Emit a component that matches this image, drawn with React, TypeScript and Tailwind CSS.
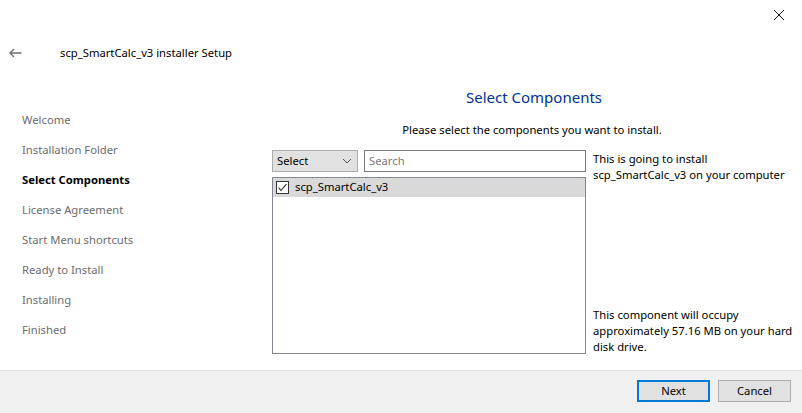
import React from "react";

const steps = [
  "Welcome",
  "Installation Folder",
  "Select Components",
  "License Agreement",
  "Start Menu shortcuts",
  "Ready to Install",
  "Installing",
  "Finished",
];

export default function App() {
  return (
    <div
      className="w-[802px] h-[413px] bg-white flex flex-col text-[11.25px] text-black overflow-hidden"
      style={{ fontFamily: '"Noto Sans", "Liberation Sans", sans-serif' }}
    >
      {/* Title bar */}
      <div className="h-[30px] flex justify-end items-start">
        <div className="w-[46px] h-[30px] flex items-center justify-center">
          <svg width="12" height="12" viewBox="0 0 12 12">
            <path d="M1 1L11 11M11 1L1 11" stroke="#111" strokeWidth="1" fill="none" />
          </svg>
        </div>
      </div>

      {/* Header */}
      <div className="h-[46px] flex items-center">
        <div className="w-[30px] flex justify-center pl-[1px]">
          <svg width="13" height="10" viewBox="0 0 13 10">
            <path d="M5 1L1 5L5 9M1 5H12.5" stroke="#707070" strokeWidth="1.4" fill="none" />
          </svg>
        </div>
        <span className="ml-[30px] pt-[1px]">scp_SmartCalc_v3 installer Setup</span>
      </div>

      {/* Main */}
      <div className="flex-1 flex">
        <div className="w-[272px] pl-[22px] pt-[29px]">
          {steps.map((s) => (
            <div
              key={s}
              className={`h-[30px] leading-[30px] ${s === "Select Components" ? "font-bold text-black" : "text-[#6d6d6d]"}`}
            >
              {s}
            </div>
          ))}
        </div>

        <div className="flex-1 pr-[12px] flex flex-col">
          <div className="h-[31px] flex items-end justify-center">
            <span className="text-[15px] text-[#003399] leading-[20px] pl-[6px]">Select Components</span>
          </div>
          <div className="h-[38px] flex items-center justify-center pl-[2px] pt-[9px]">
            Please select the components you want to install.
          </div>

          <div className="flex gap-[7px] mt-[5px]">
            <div className="w-[314px] flex flex-col gap-[5px]">
              <div className="flex gap-[6px] h-[22px]">
                <div className="w-[86px] h-[22px] bg-[#e1e1e1] border border-[#adadad] flex items-center justify-between px-[4px]">
                  <span>Select</span>
                  <svg width="10" height="6" viewBox="0 0 10 6" className="mr-[1px]">
                    <path d="M1 1L5 5L9 1" stroke="#555" strokeWidth="1" fill="none" />
                  </svg>
                </div>
                <div className="flex-1 h-[22px] border border-[#7a7a7a] flex items-center px-[4px] text-[#7a7a7a]">
                  Search
                </div>
              </div>
              <div className="h-[177px] border border-[#828790] bg-white">
                <div className="h-[19px] bg-[#d9d9d9] flex items-center pl-[3px] gap-[6px]">
                  <div className="w-[13px] h-[13px] border border-[#333] bg-white flex items-center justify-center">
                    <svg width="11" height="11" viewBox="0 0 11 11">
                      <path d="M1.5 5.5L4 8.5L9.5 2" stroke="#222" strokeWidth="1.1" fill="none" />
                    </svg>
                  </div>
                  <span>scp_SmartCalc_v3</span>
                </div>
              </div>
            </div>

            <div className="flex-1 flex flex-col justify-between leading-[16px] -mr-[10px]">
              <div className="pt-[1px]">
                This is going to install
                <br />
                scp_SmartCalc_v3 on your computer
              </div>
              <div className="-mb-[1px]">
                This component will occupy
                <br />
                approximately 57.16 MB on your hard
                <br />
                disk drive.
              </div>
            </div>
          </div>
        </div>
      </div>

      {/* Footer */}
      <div className="h-[43px] bg-[#f0f0f0] border-t border-[#dfdfdf] flex justify-end items-start pt-[9px] pr-[11px] gap-[8px]">
        <button className="w-[73px] h-[22px] bg-[#e1e1e1] border-2 border-[#0078d7] flex items-center justify-center">
          Next
        </button>
        <button className="w-[73px] h-[22px] bg-[#e1e1e1] border border-[#adadad] flex items-center justify-center">
          Cancel
        </button>
      </div>
    </div>
  );
}
